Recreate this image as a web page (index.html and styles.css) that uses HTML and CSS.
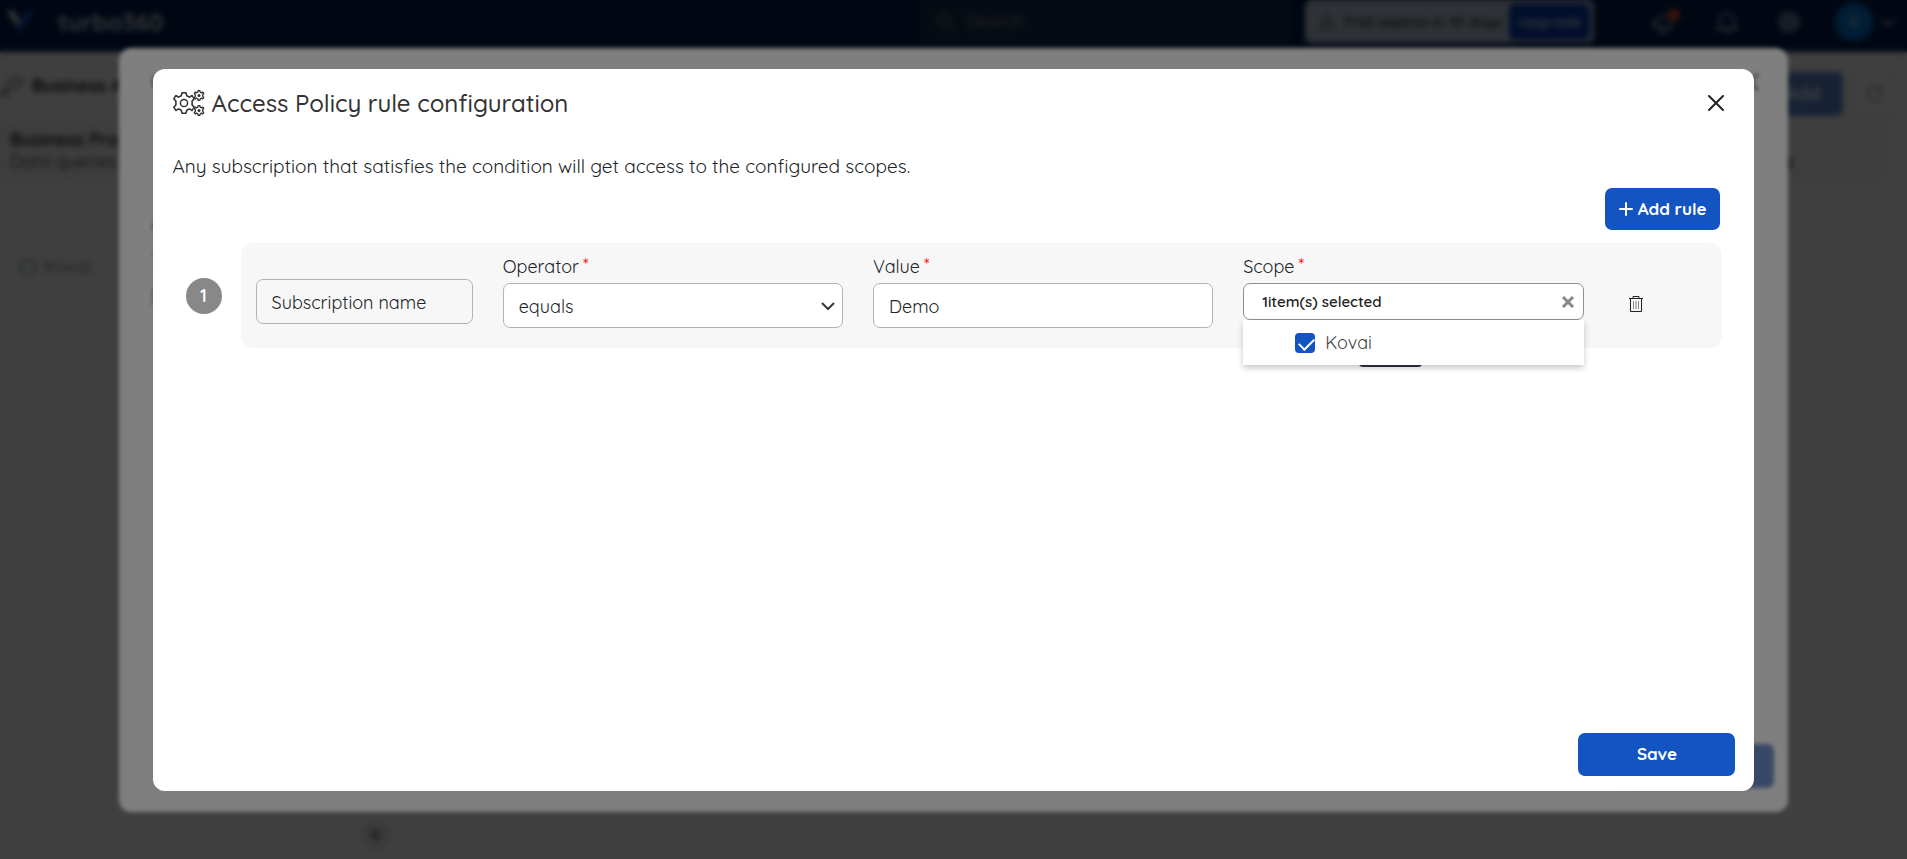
FILE: index.html
```html
<!DOCTYPE html>
<html lang="en">
<head>
<meta charset="utf-8">
<title>Access Policy rule configuration</title>
<link rel="stylesheet" href="styles.css">
</head>
<body>
<div class="page" inert>
  <header class="topbar">
    <div class="brand">
      <svg class="brand-mark" viewBox="0 0 30 30"><path d="M3 4h6l7 10-3 5z" fill="#fff"/><path d="M14 27l-2-8L23 5l8-1z" fill="#1254c4"/></svg>
      <span>turbo360</span>
    </div>
    <div class="search">
      <svg class="icon" viewBox="0 0 20 20"><circle cx="8" cy="8" r="6"/><path d="M13 13l6 6"/></svg>
      <input type="search" placeholder="Search" aria-label="Search">
    </div>
    <div class="trial">
      <svg class="icon" viewBox="0 0 20 20"><path d="M10 3l8 14H2zM10 8v5"/></svg>
      <span>Trial expires in 10 days</span>
      <button class="upgrade" type="button">Upgrade</button>
    </div>
    <nav class="tools">
      <button type="button" aria-label="Announcements"><svg class="icon tool-icon" viewBox="0 0 32 28"><path d="M4 14l18-8v15L4 18zM10 19l2 6h6"/><circle cx="25" cy="7" r="6" fill="#f04a23" stroke="none"/></svg></button>
      <button type="button" aria-label="Notifications"><svg class="icon tool-icon" viewBox="0 0 32 28"><path d="M6 21h20l-3-4v-6c0-8-14-8-14 0v6zM13 24h6"/></svg></button>
      <button type="button" aria-label="Settings"><svg class="icon tool-icon" viewBox="0 0 32 28"><circle cx="16" cy="14" r="10" stroke-dasharray="5 3"/><circle cx="16" cy="14" r="7"/><circle cx="16" cy="14" r="3"/></svg></button>
      <button class="account" type="button"><span class="avatar">V</span><svg class="icon caret" viewBox="0 0 14 10"><path d="M1 2l6 6 6-6"/></svg></button>
    </nav>
  </header>
  <div class="titlebar">
    <svg class="icon title-icon" viewBox="0 0 24 24"><circle cx="5" cy="19" r="3"/><path d="M7 17L10 5h12l-4 9h-7"/></svg>
    <strong>Business Applications</strong>
    <button class="add" type="button">Add</button>
    <button class="refresh" type="button" aria-label="Refresh"><svg class="icon" viewBox="0 0 20 20"><path d="M17 8A7 7 0 1 0 17 12M17 3v5h-5"/></svg></button>
  </div>
  <main class="content">
    <section class="resource"><strong>Business Process</strong><span>Data queries</span><b>s</b></section>
    <div class="folder"><i class="folder-icon"></i><span>Kovai</span></div>
    <button class="collapse" type="button" aria-label="Collapse"><svg class="icon" viewBox="0 0 20 20"><path d="M12 5l-5 5 5 5"/></svg></button>
  </main>
</div>

<div class="overlay" inert>
  <section class="panel panel-back">
    <div class="back-head"><svg class="icon" viewBox="0 0 20 20"><circle cx="12" cy="10" r="6"/></svg><svg class="icon" viewBox="0 0 20 20"><path d="M2 2l16 16M18 2L2 18"/></svg></div>
    <div class="back-body"><span>Access policy</span><span>Type</span><a href="#rules">Rules</a></div>
    <button class="primary back-save" type="button">Save</button>
  </section>
</div>

<div class="overlay">
  <section class="panel panel-front" role="dialog" aria-modal="true" aria-labelledby="dialog-title">
    <header class="dialog-head">
      <svg class="gears" viewBox="0 0 32 26">
        <defs>
          <path id="gear" d="M-2-11H2L3-7.800 5.800-6.300 8.800-8 11-4.500 8.700-2V2L11 4.500 8.800 8 5.800 6.300 3 7.800 2 11H-2L-3 7.800-5.800 6.300-8.800 8-11 4.500-8.700 2V-2L-11-4.500-8.800-8-5.800-6.300-3-7.800Z"/>
        </defs>
        <use href="#gear" transform="translate(11 13) scale(.93)" stroke-width="1.700"/>
        <circle cx="11" cy="13" r="3.600" stroke-width="1.500"/>
        <g class="knockout"><circle cx="26" cy="5.500" r="5.500"/><circle cx="26" cy="20.500" r="5.500"/></g>
        <use href="#gear" transform="translate(26 5.500) scale(.43)" stroke-width="3.200"/>
        <use href="#gear" transform="translate(26 20.500) scale(.43)" stroke-width="3.200"/>
        <g class="dots"><circle cx="26" cy="5.500" r="1.500"/><circle cx="26" cy="20.500" r="1.500"/></g>
      </svg>
      <h1 id="dialog-title">Access Policy rule configuration</h1>
      <button class="close" type="button" aria-label="Close"><svg viewBox="0 0 18 18"><path d="M2 2l14 14M16 2L2 16"/></svg></button>
    </header>
    <p class="intro">Any subscription that satisfies the condition will get access to the configured scopes.</p>
    <div class="actions">
      <button class="primary add-rule" type="button"><svg viewBox="0 0 14 14"><path d="M7 1v12M1 7h12"/></svg>Add rule</button>
    </div>
    <div class="rule">
      <span class="number">1</span>
      <div class="rule-card">
        <input class="control subject" type="text" value="Subscription name" aria-label="Field" readonly>
        <div class="field">
          <label for="operator">Operator<sup>*</sup></label>
          <div class="select">
            <select class="control" id="operator"><option>equals</option></select>
            <svg viewBox="0 0 14 10"><path d="M1 2l6 6 6-6"/></svg>
          </div>
        </div>
        <div class="field">
          <label for="value">Value<sup>*</sup></label>
          <input class="control" id="value" type="text" value="Demo">
        </div>
        <div class="field">
          <label for="scope">Scope<sup>*</sup></label>
          <div class="multi">
            <div class="multi-box">
              <button class="multi-value" id="scope" type="button" aria-expanded="true">1item(s) selected</button>
              <button class="clear" type="button" aria-label="Clear selection"><svg viewBox="0 0 14 14"><path d="M2 2l10 10M12 2L2 12"/></svg></button>
            </div>
            <div class="tip"></div>
            <div class="menu">
              <label class="option"><input type="checkbox" checked><span>Kovai</span></label>
            </div>
          </div>
        </div>
        <button class="delete" type="button" aria-label="Delete rule"><svg viewBox="0 0 16 18"><path d="M1 3.500h14M5 3V1.500h6V3M2.500 4v12.500h11V4"/><path d="M5.500 6v8M10.500 6v8" stroke="#a98558"/><path d="M8 6v8" stroke="#5b7fc7"/></svg></button>
      </div>
    </div>
    <footer class="dialog-foot"><button class="primary save" type="button">Save</button></footer>
  </section>
</div>
</body>
</html>
```
FILE: styles.css
```css
* { box-sizing: border-box; }
html, body { height: 100%; }
body {
  margin: 0;
  overflow: hidden;
  font-family: Quicksand, "Noto Sans", sans-serif;
  font-size: 18px;
  line-height: 24px;
  color: #212529;
  background: #fff;
}
button, input, select { font: inherit; color: inherit; }
button { padding: 0; border: 0; background: none; cursor: pointer; }
.icon { width: 20px; height: 20px; fill: none; stroke: currentColor; stroke-width: 2; flex: none; }

/* Application page */
.page { display: flex; flex-direction: column; height: 100%; }
.topbar {
  display: flex;
  align-items: center;
  height: 52px;
  padding: 0 12px 8px 4px;
  background: #001d4d;
  color: #b9bfd0;
}
.brand { display: flex; align-items: center; gap: 24px; flex: none; width: 46%; color: #d5d7dc; font-size: 24px; font-weight: 700; }
.brand-mark { width: 30px; height: 30px; }
.search { display: flex; align-items: center; gap: 8px; flex: none; width: 19.5%; height: 44px; margin-left: 46px; padding: 0 16px; background: #182e4c; color: #808590; }
.search input { width: 100%; border: 0; background: none; }
.search input::placeholder { color: #a0a2ac; }
.trial { display: flex; align-items: center; gap: 6px; height: 42px; margin-left: 16px; padding: 0 4px 0 12px; border-radius: 6px; background: #c0c8dd; color: #333; font-size: 15px; font-weight: 600; white-space: nowrap; }
.trial .icon { color: #777; }
.upgrade { height: 36px; padding: 0 9px; border-radius: 6px; background: #003aae; color: #c5cbe0; font-weight: 700; }
.tools { display: flex; align-items: center; gap: 30px; margin-left: auto; }
.tool-icon { display: block; width: 32px; height: 28px; }
.account { display: flex; align-items: center; gap: 8px; }
.avatar { width: 38px; height: 38px; border-radius: 50%; background: #0078d4; color: #fff; line-height: 38px; }
.caret { width: 14px; height: 10px; }
.titlebar { display: flex; align-items: center; gap: 8px; padding: 19px 10px 0 0; }
.titlebar strong, .title-icon { margin-bottom: 16px; }
.title-icon { width: 24px; height: 24px; color: #777; }
.add { width: 80px; height: 44px; margin-left: auto; border-radius: 6px; background: #5b86cf; color: #fff; font-weight: 700; }
.refresh { display: grid; place-items: center; width: 46px; height: 46px; border: 1px solid #ccc; border-radius: 8px; color: #aaa; }
.content { position: relative; flex: 1; }
.resource { display: grid; align-content: center; margin-top: 4px; margin-right: 20px; padding: 0 94px 0 10px; height: 60px; border-radius: 8px; background: #f7f7f7; line-height: 22px; color: #333; }
.resource b { grid-area: 1 / 2 / 3 / 3; align-self: end; justify-self: end; }
.folder { display: flex; align-items: center; gap: 8px; padding: 74px 0 0 20px; color: #666; }
.folder-icon { width: 16px; height: 14px; border: 2px solid #8dbb99; border-radius: 3px; }
.collapse { position: absolute; left: 362px; bottom: 10px; display: grid; place-items: center; width: 28px; height: 28px; border-radius: 50%; background: #e8e8e8; }

/* Dialog layers */
.overlay {
  position: fixed;
  inset: 0;
  display: grid;
  place-items: center;
  padding-top: 1px;
  background: rgba(0, 0, 0, .5);
  backdrop-filter: blur(2px);
}
.panel { display: flex; flex-direction: column; border-radius: 12px; background: #fff; }
.panel-back { width: 87.5vw; height: 89vh; padding: 20px 14px 24px 28px; }
.back-head { display: flex; justify-content: space-between; padding: 4px 14px 0 0; color: #555; }
.back-body { display: flex; flex-direction: column; gap: 12px; padding: 120px 0 0 4px; }
.back-body a { color: #1254c0; }
.panel-front { width: 84vw; height: 84vh; padding: 19px 19px 15px 20px; }

.dialog-head { display: flex; align-items: center; color: #333; }
.gears { width: 32px; height: 26px; fill: none; stroke: #333; stroke-linejoin: round; }
.knockout { fill: #fff; stroke: none; }
.dots { fill: #333; stroke: none; }
h1 { margin: 0 0 0 7px; font-size: 24px; font-weight: 500; line-height: 30px; }
.close { margin: 0 6px 0 auto; padding: 4px; }
.close svg { display: block; width: 18px; height: 18px; fill: none; stroke: #222; stroke-width: 2; stroke-linecap: round; }
.intro { margin: 36px 0 10px; font-size: 19px; line-height: 24px; }
.actions { display: flex; justify-content: flex-end; padding-right: 15px; }
.primary { border-radius: 7px; background: #1254c0; color: #fff; font-size: 17px; font-weight: 700; }
.back-save { align-self: flex-end; width: 157px; height: 44px; margin-top: auto; background: #7391cd; }
.add-rule { display: flex; align-items: center; gap: 5px; height: 42px; padding: 0 14px; }
.add-rule svg { width: 14px; height: 14px; fill: none; stroke: #fff; stroke-width: 2; stroke-linecap: round; }

.rule { display: flex; align-items: center; gap: 19px; padding: 13px 13px 0 13px; }
.number { flex: none; width: 36px; height: 36px; border-radius: 50%; background: #888; color: #fff; font-weight: 600; line-height: 36px; text-align: center; }
.rule-card {
  display: grid;
  grid-template-columns: 217fr 340fr 340fr 341fr 90fr;
  column-gap: 30px;
  flex: 1;
  height: 105px;
  padding: 12px 18px 0 15px;
  border-radius: 12px;
  background: #f7f7f7;
}
.control {
  display: block;
  width: 100%;
  height: 45px;
  padding: 2px 15px 0;
  border: 1px solid #b3b3b3;
  border-radius: 7px;
  background: #fff;
  outline: 0;
}
.subject { margin-top: 24px; background: #f7f7f7; }
.field label { display: block; line-height: 24px; margin-bottom: 4px; }
.field sup { margin-left: 4px; color: #f00; font-size: 18px; line-height: 0; vertical-align: 2px; }
.select { position: relative; }
.select select { appearance: none; }
.select svg { position: absolute; right: 8px; top: 18px; width: 14px; height: 10px; fill: none; stroke: #343a40; stroke-width: 2; pointer-events: none; }
.multi { position: relative; }
.multi-box { display: flex; align-items: center; height: 37px; padding: 0 8px 0 18px; border: 1px solid #8f8f8f; border-radius: 7px; background: #fff; }
.multi-value { flex: 1; font-size: 15px; font-weight: 600; text-align: left; color: #222; }
.clear svg { display: block; width: 14px; height: 14px; fill: none; stroke: #888; stroke-width: 3; }
.tip { position: absolute; top: 44px; left: 116px; width: 63px; height: 40px; border-radius: 4px; background: #2f3247; }
.menu { position: absolute; top: 37px; left: 0; right: 0; padding: 11px 0 10px 52px; background: #fff; box-shadow: 0 3px 6px rgba(0, 0, 0, .22); }
.menu .option { display: flex; align-items: center; gap: 10px; margin: 0; color: #444; }
.option input {
  appearance: none;
  width: 20px;
  height: 20px;
  margin: 0;
  border-radius: 4px;
  background: #1254c0;
  position: relative;
}
.option input:checked::after {
  content: "";
  position: absolute;
  left: 7px;
  top: 2px;
  width: 7px;
  height: 13px;
  border: solid #fff;
  border-width: 0 2px 2px 0;
  transform: rotate(45deg);
}
.delete { align-self: start; justify-self: start; margin-top: 40px; margin-left: 14px; }
.delete svg { display: block; width: 16px; height: 18px; fill: none; stroke: #222; stroke-width: 1; }
.dialog-foot { display: flex; justify-content: flex-end; margin-top: auto; }
.save { width: 157px; height: 43px; }
```
